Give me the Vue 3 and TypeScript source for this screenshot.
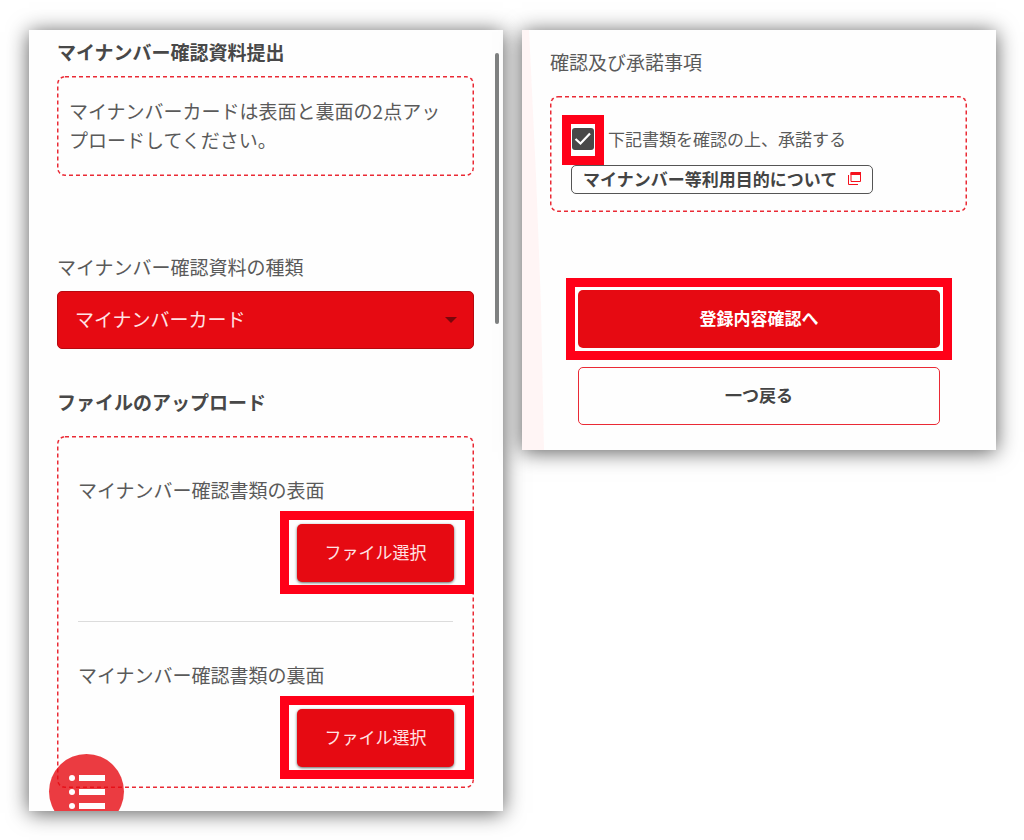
<script setup lang="ts">
import { ref } from 'vue'

interface UploadSide {
  id: string
  label: string
}

const documentTypes: string[] = ['マイナンバーカード']
const selectedType = ref<string>(documentTypes[0])
const agreed = ref<boolean>(true)

const sides: UploadSide[] = [
  { id: 'front', label: 'マイナンバー確認書類の表面' },
  { id: 'back', label: 'マイナンバー確認書類の裏面' },
]
</script>

<template>
  <main class="page">
    <section class="panel upload">
      <h2 class="heading">マイナンバー確認資料提出</h2>
      <div class="dashed notice">
        <svg class="outline" aria-hidden="true"><rect width="100%" height="100%" rx="8" /></svg>
        <p class="notice-text">マイナンバーカードは表面と裏面の2点アップロードしてください。</p>
      </div>

      <label class="label type-label" for="doc-type">マイナンバー確認資料の種類</label>
      <div class="select-wrap">
        <select id="doc-type" v-model="selectedType" class="select">
          <option v-for="t in documentTypes" :key="t" :value="t">{{ t }}</option>
        </select>
        <svg class="caret" width="12" height="6" viewBox="0 0 12 6" aria-hidden="true">
          <path d="M0 0H12L6 6Z" fill="#7a060b" />
        </svg>
      </div>

      <h2 class="heading files-heading">ファイルのアップロード</h2>
      <div class="dashed files">
        <svg class="outline" aria-hidden="true"><rect width="100%" height="100%" rx="8" /></svg>
        <div v-for="side in sides" :key="side.id" class="file">
          <span :id="'label-' + side.id" class="label">{{ side.label }}</span>
          <div class="marker file-marker">
            <button type="button" class="btn btn-file" :aria-describedby="'label-' + side.id">ファイル選択</button>
          </div>
        </div>
      </div>

      <button type="button" class="menu" aria-label="メニュー">
        <svg width="36" height="36" viewBox="0 0 36 36" fill="#fff" aria-hidden="true">
          <circle cx="3" cy="4" r="3" />
          <rect x="10" y="1" width="26" height="6" />
          <circle cx="3" cy="18" r="3" />
          <rect x="10" y="15" width="26" height="6" />
          <circle cx="3" cy="32" r="3" />
          <rect x="10" y="29" width="26" height="6" />
        </svg>
      </button>
      <span class="scrollbar" aria-hidden="true"></span>
    </section>

    <section class="panel confirm">
      <h2 class="label">確認及び承諾事項</h2>
      <div class="dashed terms">
        <svg class="outline" aria-hidden="true"><rect width="100%" height="100%" rx="8" /></svg>
        <div class="agree">
          <span class="marker check-marker">
            <input id="agree" v-model="agreed" type="checkbox" class="check" />
            <svg v-if="agreed" class="tick" width="22" height="22" viewBox="0 0 22 22" aria-hidden="true">
              <path d="M3.500 11L8.500 15.500L18 5.500" fill="none" stroke="#fff" stroke-width="2.200" />
            </svg>
          </span>
          <label for="agree" class="agree-label">下記書類を確認の上、承諾する</label>
        </div>
        <a href="#" class="doc-link">
          マイナンバー等利用目的について
          <svg width="13" height="13" viewBox="0 0 13 13" fill="none" stroke="#f5101c" aria-hidden="true">
            <path d="M0.500 3V12.500H10" />
            <path d="M3 1V9.500H12.500V1" />
            <path d="M2.500 1.500H13" stroke-width="3" />
          </svg>
        </a>
      </div>
      <div class="marker submit-marker">
        <button type="button" class="btn btn-submit">登録内容確認へ</button>
      </div>
      <button type="button" class="btn btn-back">一つ戻る</button>
    </section>
  </main>
</template>

<style>
body {
  margin: 0;
  background: #fff;
}
</style>

<style scoped>
.page {
  box-sizing: border-box;
  display: grid;
  grid-template-columns: 1fr 1fr;
  align-items: start;
  gap: 19px;
  padding: 30px 28px 29px 29px;
  font-family: "Noto Sans CJK JP", sans-serif;
  font-size: 19px;
  line-height: 29px;
  color: #5a5a5a;
}

.page * {
  box-sizing: border-box;
}

.panel {
  position: relative;
  padding: 7px 29px 23px 28px;
  background: #fefefe;
  box-shadow: 0 2px 20px rgba(0, 0, 0, 0.65);
}

.upload {
  overflow: hidden;
}

.heading,
.label {
  display: block;
  margin: 0;
  font-size: 19px;
  font-weight: 400;
}

.heading {
  font-weight: 700;
  color: #484848;
}

.dashed {
  position: relative;
}

/* The outer half of the stroke is clipped by the svg's own edge. */
.outline {
  position: absolute;
  inset: 0;
  width: 100%;
  height: 100%;
  border-radius: 8px;
  overflow: hidden;
  fill: none;
  stroke: #ea2a35;
  stroke-width: 3px;
  stroke-dasharray: 4 3;
  pointer-events: none;
}

.notice {
  margin: 10px 0 76px;
  padding: 20px 24px 22px 12px;
}

.notice-text {
  margin: 0;
}

.select-wrap {
  position: relative;
  margin-top: 10px;
}

.select {
  display: block;
  width: 100%;
  height: 58px;
  padding: 0 17px 4px;
  border: 1px solid #b8080f;
  border-radius: 5px;
  appearance: none;
  background: #e60a12;
  color: #ffe3e4;
  font: inherit;
}

.caret {
  position: absolute;
  top: 26px;
  right: 17px;
}

.files-heading {
  margin: 38px 0 20px;
}

.files {
  padding: 2px 21px 9px;
}

.file {
  padding-top: 37px;
}

.file + .file {
  margin-top: 27px;
  padding-top: 38px;
  border-top: 1px solid #dcdcdc;
}

.marker {
  position: relative;
  border: 9px solid #ff0018;
  background: #fefefe;
}

.file-marker {
  width: 194px;
  margin: 7px -21px 0 auto;
  padding: 4px 11px 3px 8px;
}

.btn {
  display: block;
  width: 100%;
  height: 58px;
  padding: 0 0 3px;
  border: 0;
  border-radius: 5px;
  background: #e60a12;
  color: #fff;
  font: inherit;
  font-size: 17px;
}

.btn-file {
  color: #ffe3e4;
  box-shadow: 0 1px 3px rgba(0, 0, 0, 0.6);
}

.menu {
  position: absolute;
  left: 20px;
  bottom: -18px;
  display: flex;
  align-items: center;
  justify-content: center;
  width: 75px;
  height: 75px;
  padding: 0;
  border: 0;
  border-radius: 50%;
  background: rgba(230, 10, 18, 0.8);
}

.scrollbar {
  position: absolute;
  top: 23px;
  right: 4px;
  width: 4px;
  height: 271px;
  border-radius: 2px;
  background: #7f8181;
}

.confirm {
  padding: 17px 29px 25px 28px;
}

.confirm::before {
  content: "";
  position: absolute;
  inset: 0 auto 0 0;
  width: 22px;
  background: #fff5f5;
  clip-path: polygon(0 0, 32% 0, 64% 35%, 86% 65%, 100% 100%, 0 100%);
}

.terms {
  margin: 20px 0 66px;
  padding: 19px 12px 18px;
}

.agree {
  display: flex;
  align-items: center;
  gap: 4px;
  font-size: 17px;
}

.agree-label {
  padding-bottom: 4px;
}

.check-marker {
  width: 42px;
  height: 50px;
  padding: 4px 1px;
}

.check {
  display: block;
  width: 22px;
  height: 22px;
  margin: 0;
  border-radius: 3px;
  appearance: none;
  background: #484848;
}

.tick {
  position: absolute;
  top: 4px;
  left: 1px;
  pointer-events: none;
}

.doc-link {
  display: flex;
  align-items: center;
  gap: 11px;
  width: fit-content;
  height: 29px;
  margin-left: 9px;
  padding: 0 11px 2px 11px;
  border: 1px solid #555;
  border-radius: 5px;
  color: #444;
  font-size: 17px;
  font-weight: 700;
  text-decoration: none;
}

.submit-marker {
  margin: 0 15px 7px 16px;
  padding: 3px;
}

.btn-submit {
  font-weight: 700;
}

.btn-back {
  width: auto;
  min-width: calc(100% - 55px);
  margin: 0 27px 0 28px;
  border: 1px solid #ea2a35;
  background: #fefefe;
  color: #444;
  font-weight: 700;
}
</style>
